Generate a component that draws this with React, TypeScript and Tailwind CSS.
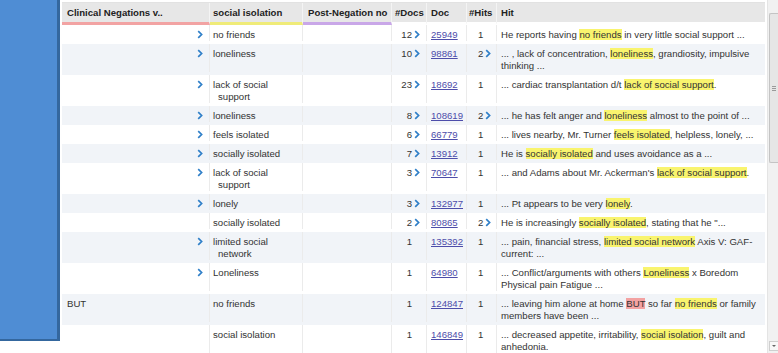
import React from "react"

type Row = {
  chev: boolean
  neg?: string
  term: string[]
  docs: string
  docsChev: boolean
  doc: string
  hits: string
  hitsChev: boolean
  hit: string[]
}

// [..] = yellow hit, {..} = red negation
const rows: Row[] = [
  { chev: true, term: ["no friends"], docs: "12", docsChev: true, doc: "25949", hits: "1", hitsChev: false, hit: ["He reports having [no friends] in very little social support ..."] },
  { chev: true, term: ["loneliness"], docs: "10", docsChev: true, doc: "98861", hits: "2", hitsChev: true, hit: ["... , lack of concentration, [loneliness], grandiosity, impulsive", "thinking ..."] },
  { chev: true, term: ["lack of social", "support"], docs: "23", docsChev: true, doc: "18692", hits: "1", hitsChev: false, hit: ["... cardiac transplantation d/t [lack of social support]."] },
  { chev: true, term: ["loneliness"], docs: "8", docsChev: true, doc: "108619", hits: "2", hitsChev: true, hit: ["... he has felt anger and [loneliness] almost to the point of ..."] },
  { chev: true, term: ["feels isolated"], docs: "6", docsChev: true, doc: "66779", hits: "1", hitsChev: false, hit: ["... lives nearby, Mr. Turner [feels isolated], helpless, lonely, ..."] },
  { chev: true, term: ["socially isolated"], docs: "7", docsChev: true, doc: "13912", hits: "1", hitsChev: false, hit: ["He is [socially isolated] and uses avoidance as a ..."] },
  { chev: true, term: ["lack of social", "support"], docs: "3", docsChev: true, doc: "70647", hits: "1", hitsChev: false, hit: ["... and Adams about Mr. Ackerman's [lack of social support]."] },
  { chev: true, term: ["lonely"], docs: "3", docsChev: true, doc: "132977", hits: "1", hitsChev: false, hit: ["... Pt appears to be very [lonely]."] },
  { chev: false, term: ["socially isolated"], docs: "2", docsChev: true, doc: "80865", hits: "2", hitsChev: true, hit: ["He is increasingly [socially isolated], stating that he \"..."] },
  { chev: true, term: ["limited social", "network"], docs: "1", docsChev: false, doc: "135392", hits: "1", hitsChev: false, hit: ["... pain, financial stress, [limited social network] Axis V: GAF-", "current: ..."] },
  { chev: true, term: ["Loneliness"], docs: "1", docsChev: false, doc: "64980", hits: "1", hitsChev: false, hit: ["... Conflict/arguments with others [Loneliness] x Boredom", "Physical pain Fatigue ..."] },
  { chev: false, neg: "BUT", term: ["no friends"], docs: "1", docsChev: false, doc: "124847", hits: "1", hitsChev: false, hit: ["... leaving him alone at home {BUT} so far [no friends] or family", "members have been ..."] },
  { chev: false, term: ["social isolation"], docs: "1", docsChev: false, doc: "146849", hits: "1", hitsChev: false, hit: ["... decreased appetite, irritability, [social isolation], guilt and", "anhedonia."] },
]

const Chevron = () => (
  <svg width="6" height="9" viewBox="0 0 6 9" className="shrink-0">
    <path d="M1.2 1.2 L4.6 4.5 L1.2 7.8" fill="none" stroke="#2f7fc8" strokeWidth="1.7" />
  </svg>
)

const Marked = ({ line }: { line: string }) => {
  const parts = line.split(/(\[[^\]]+\]|\{[^}]+\})/)
  return (
    <>
      {parts.map((p, i) => {
        if (p.startsWith("[")) return <span key={i} className="bg-[#f9f46e]">{p.slice(1, -1)}</span>
        if (p.startsWith("{")) return <span key={i} className="bg-[#f3a2a2]">{p.slice(1, -1)}</span>
        return <span key={i}>{p}</span>
      })}
    </>
  )
}

const cols = "grid grid-cols-[148px_93px_89px_35px_40px_30px_268px]"

export default function App() {
  return (
    <div className="flex h-[353px] w-[778px] overflow-hidden bg-white font-['Liberation_Sans',Arial,sans-serif] text-[9.6px] leading-[12px] text-[#333]">
      <div className="h-[341px] w-[60px] shrink-0 border-r-[3px] border-b-2 border-[#34679e] bg-[#4f8dd4]" />

      <div className="ml-[2px] mt-[2px] w-[703px] shrink-0">
        <div className={`${cols} border-t border-[#e2e2e2] bg-[#e7e7e7] font-bold text-[#222]`}>
          <div className="h-[22px] border-r border-b-[3px] border-r-[#f4f4f4] border-b-[#f2a3a3] pl-[5px] pt-[4px]">Clinical Negations v..</div>
          <div className="h-[22px] border-r border-b-[3px] border-r-[#f4f4f4] border-b-[#efeb78] pl-[3px] pt-[4px]">social isolation</div>
          <div className="h-[22px] border-r border-b-[3px] border-r-[#f4f4f4] border-b-[#c9a7e8] pl-[5px] pt-[4px]">Post-Negation no</div>
          <div className="h-[22px] border-r border-b-[3px] border-r-[#f4f4f4] border-b-white pl-[3px] pt-[4px]">#Docs</div>
          <div className="h-[22px] border-r border-b-[3px] border-r-[#f4f4f4] border-b-white pl-[4px] pt-[4px]">Doc</div>
          <div className="h-[22px] border-r border-b-[3px] border-r-[#f4f4f4] border-b-white pl-[2px] pt-[4px]">#Hits</div>
          <div className="h-[22px] border-b-[3px] border-b-white pl-[4px] pt-[4px]">Hit</div>
        </div>

        {rows.map((r, i) => (
          <div key={i} className={`${cols} ${i % 2 === 1 ? "bg-[#f1f4f8]" : "bg-white"} pb-[3px]`}>
            <div className="flex items-start justify-between border-r border-[#ebebeb] pl-[5px] pr-[6px] pt-[4px]">
              <span>{r.neg ?? ""}</span>
              {r.chev && <span className="mt-[1px]"><Chevron /></span>}
            </div>
            <div className="border-r border-[#ebebeb] pl-[3px] pt-[4px]">
              {r.term.map((t, j) => (
                <div key={j} className={j > 0 ? "pl-[5px]" : ""}>{t}</div>
              ))}
            </div>
            <div className="border-r border-[#ebebeb]" />
            <div className="flex items-start justify-end gap-[2px] border-r border-[#ebebeb] pr-[6px] pt-[4px]">
              <span>{r.docs}</span>
              <span className={`mt-[1px] ${r.docsChev ? "" : "invisible"}`}><Chevron /></span>
            </div>
            <div className="border-r border-[#ebebeb] pl-[4px] pt-[4px]">
              <span className="text-[#4d4daa] underline">{r.doc}</span>
            </div>
            <div className="flex items-start gap-[2px] border-r border-[#ebebeb] pl-[11px] pt-[4px]">
              <span>{r.hits}</span>
              {r.hitsChev && <span className="mt-[1px]"><Chevron /></span>}
            </div>
            <div className="pl-[4px] pt-[4px] whitespace-nowrap">
              {r.hit.map((l, j) => (
                <div key={j}><Marked line={l} /></div>
              ))}
            </div>
          </div>
        ))}
      </div>

      <div className="ml-[2px] flex h-[353px] flex-1 flex-col border-l border-[#e4e4e4] bg-[#f1f1f1]">
        <div className="h-[13px]" />
        <div className="ml-[1px] flex h-[150px] items-center justify-center rounded-l-[2px] border border-r-0 border-[#c4c4c4] bg-[#e6e6e6]">
          <div className="flex flex-col gap-[1px]">
            <div className="h-px w-[4px] bg-[#9a9a9a]" />
            <div className="h-px w-[4px] bg-[#9a9a9a]" />
            <div className="h-px w-[4px] bg-[#9a9a9a]" />
          </div>
        </div>
        <div className="flex-1" />
        <div className="mb-[2px] ml-[1px] flex h-[10px] items-center justify-center border border-r-0 border-[#cfcfcf] bg-[#f8f8f8]">
          <div className="h-0 w-0 border-x-[2px] border-t-[2px] border-x-transparent border-t-[#666]" />
        </div>
      </div>
    </div>
  )
}
